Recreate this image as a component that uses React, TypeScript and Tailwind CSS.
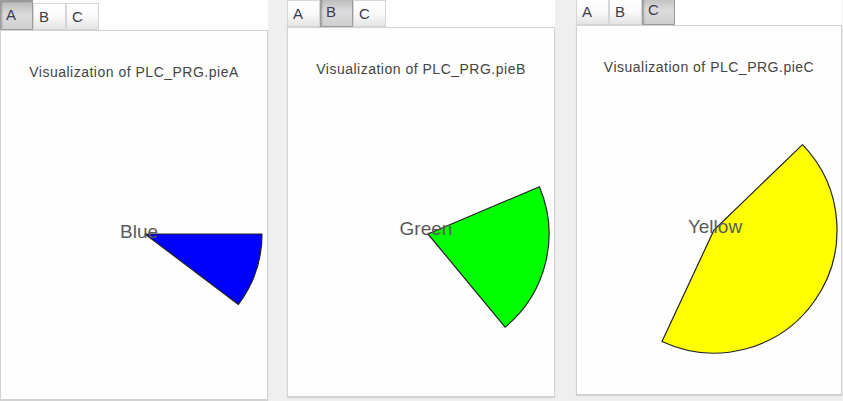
import React from "react";

type PieProps = {
  cx: number;
  cy: number;
  r: number;
  a0: number;
  a1: number;
  fill: string;
  label: string;
  lx: number;
  ly: number;
};

function Pie({ cx, cy, r, a0, a1, fill, label, lx, ly }: PieProps) {
  const rad = (d: number) => (d * Math.PI) / 180;
  const x0 = cx + r * Math.cos(rad(a0));
  const y0 = cy + r * Math.sin(rad(a0));
  const x1 = cx + r * Math.cos(rad(a1));
  const y1 = cy + r * Math.sin(rad(a1));
  const large = a1 - a0 > 180 ? 1 : 0;
  const d = `M${cx} ${cy} L${x0.toFixed(1)} ${y0.toFixed(1)} A${r} ${r} 0 ${large} 1 ${x1.toFixed(1)} ${y1.toFixed(1)} Z`;
  return (
    <svg className="absolute inset-0" width="100%" height="100%">
      <path d={d} fill={fill} stroke="#222" strokeWidth="1.2" strokeLinejoin="round" />
      <text
        x={lx}
        y={ly}
        textAnchor="middle"
        fontSize="19"
        fill="#5a5a5a"
        fontFamily="'Liberation Sans', Arial, sans-serif"
      >
        {label}
      </text>
    </svg>
  );
}

function Tab({ label, active }: { label: string; active: boolean }) {
  return active ? (
    <div className="w-[33px] h-[30px] self-end border border-[#9c9c9c] bg-gradient-to-b from-[#b9b9b9] via-[#dcdcdc] to-[#cfcfcf] shadow-[inset_1px_1px_2px_rgba(0,0,0,0.25)] text-[15px] text-[#3c3c4c] pl-[5px] pt-[4px] leading-[20px]">
      {label}
    </div>
  ) : (
    <div className="w-[33px] h-[27px] self-end border border-[#d6d6d6] bg-gradient-to-b from-white via-[#fafafa] to-[#e4e4e4] text-[15px] text-[#3c3c4c] pl-[5px] pt-[3px] leading-[20px]">
      {label}
    </div>
  );
}

type PanelProps = {
  active: number;
  title: string;
  className: string;
  pie: PieProps;
};

function Panel({ active, title, className, pie }: PanelProps) {
  return (
    <div className={`shrink-0 flex flex-col bg-white self-start ${className}`}>
      <div className="flex h-[30px]">
        {["A", "B", "C"].map((t, i) => (
          <Tab key={t} label={t} active={i === active} />
        ))}
      </div>
      <div className="relative h-[370px] border border-[#d2d2d2] bg-[#fefefe] shadow-[0_1px_1px_rgba(0,0,0,0.12)]">
        <div className="pt-[33px] text-center text-[14px] tracking-[0.5px] leading-[16px] text-[#444]">{title}</div>
        <Pie {...pie} />
      </div>
    </div>
  );
}

export default function App() {
  return (
    <div className="w-[843px] h-[401px] bg-[#efefef] flex overflow-hidden font-['Liberation_Sans',Arial,sans-serif]">
      <Panel
        active={0}
        title="Visualization of PLC_PRG.pieA"
        className="w-[268px]"
        pie={{ cx: 144, cy: 203, r: 117, a0: 0, a1: 37, fill: "#0000ff", label: "Blue", lx: 138, ly: 207 }}
      />
      <Panel
        active={1}
        title="Visualization of PLC_PRG.pieB"
        className="w-[268px] ml-[19px] -mt-[3px]"
        pie={{ cx: 140, cy: 206, r: 121, a0: -23, a1: 50.4, fill: "#00ff00", label: "Green", lx: 138, ly: 207 }}
      />
      <Panel
        active={2}
        title="Visualization of PLC_PRG.pieC"
        className="w-[266px] ml-[21px] -mt-[5px]"
        pie={{ cx: 137, cy: 204, r: 123, a0: -44, a1: 115, fill: "#ffff00", label: "Yellow", lx: 138, ly: 207 }}
      />
    </div>
  );
}
